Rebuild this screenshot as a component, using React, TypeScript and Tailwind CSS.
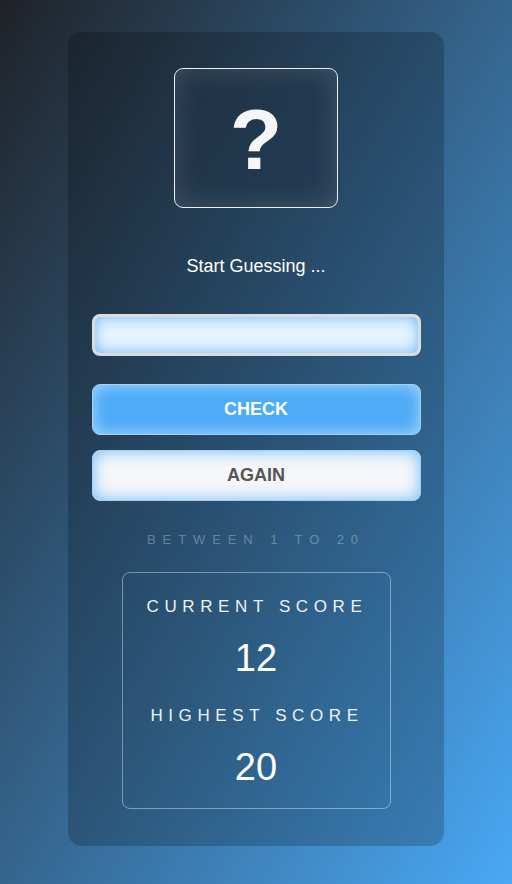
import React from "react";

export default function App() {
  return (
    <div
      className="min-h-[884px] w-full flex justify-center pt-8 pb-[38px] bg-[linear-gradient(to_bottom_right,#1f2228,#4aa8f4)]"
      style={{ fontFamily: '"Liberation Sans", Arial, sans-serif' }}
    >
      <div className="w-[376px] h-[814px] rounded-[14px] bg-black/20 flex flex-col items-center pt-9">
        <div className="w-[164px] h-[140px] rounded-[9px] border-[1.5px] border-[#eceef2] bg-[#1f3448]/60 shadow-[inset_0_0_28px_rgba(255,255,255,0.14)] flex items-center justify-center">
          <span className="text-[86px] font-bold text-[#f5f6f8] leading-none mt-[2px]">?</span>
        </div>
        <p className="mt-[47px] text-[18px] leading-[22px] text-white">Start Guessing ...</p>
        <div className="mt-[37px] w-[329px] h-[42px] rounded-[8px] border-[3px] border-[#dcdcdc] bg-[#e6f3fe] shadow-[inset_0_0_14px_#6ab8f9]" />
        <button className="mt-[28px] w-[329px] h-[51px] rounded-[8px] border border-[#9fd0f9] bg-[#4dabf7] shadow-[inset_0_0_16px_rgba(255,255,255,0.55)] text-white font-bold text-[18px]">
          CHECK
        </button>
        <button className="mt-[15px] w-[329px] h-[51px] rounded-[8px] border border-[#9fd0f9] bg-[#f5f6f8] shadow-[inset_0_0_16px_#6fbcf9] text-[#555] font-bold text-[18px]">
          AGAIN
        </button>
        <p className="mt-[30px] text-[13px] leading-[18px] tracking-[6.9px] text-white/30">BETWEEN 1 TO 20</p>
        <div className="mt-[23px] w-[269px] h-[237px] rounded-[8px] border border-white/40 flex flex-col items-center pt-[23px]">
          <p className="text-[17px] leading-[22px] tracking-[5.6px] pl-[2px] text-[#eef1f4]">CURRENT SCORE</p>
          <p className="mt-[20px] text-[38px] leading-[40px] text-white">12</p>
          <p className="mt-[27px] text-[17px] leading-[22px] tracking-[5.6px] pl-[2px] text-[#eef1f4]">HIGHEST SCORE</p>
          <p className="mt-[20px] text-[38px] leading-[40px] text-white">20</p>
        </div>
      </div>
    </div>
  );
}
